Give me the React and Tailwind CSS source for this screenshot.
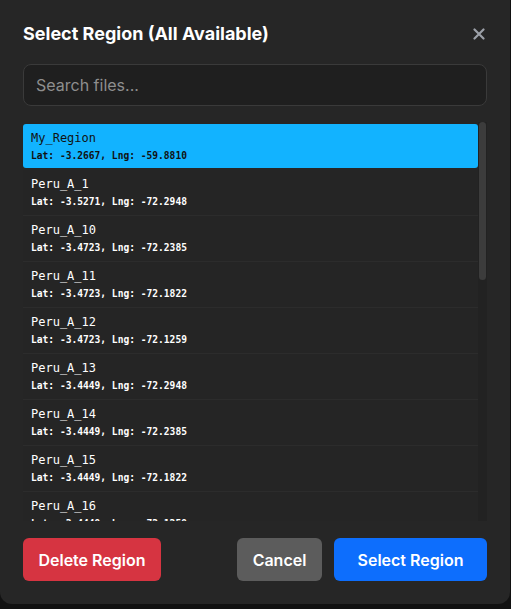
import React from "react";

const items = [
  ["My_Region", "Lat: -3.2667, Lng: -59.8810"],
  ["Peru_A_1", "Lat: -3.5271, Lng: -72.2948"],
  ["Peru_A_10", "Lat: -3.4723, Lng: -72.2385"],
  ["Peru_A_11", "Lat: -3.4723, Lng: -72.1822"],
  ["Peru_A_12", "Lat: -3.4723, Lng: -72.1259"],
  ["Peru_A_13", "Lat: -3.4449, Lng: -72.2948"],
  ["Peru_A_14", "Lat: -3.4449, Lng: -72.2385"],
  ["Peru_A_15", "Lat: -3.4449, Lng: -72.1822"],
  ["Peru_A_16", "Lat: -3.4449, Lng: -72.1259"],
];

export default function App() {
  return (
    <div className="h-[609px] w-[511px] bg-[#111111] overflow-hidden" style={{ fontFamily: "Inter, 'Liberation Sans', sans-serif" }}>
      <div className="h-[604px] w-[510px] bg-[#262626] rounded-b-[12px] px-[23px] pt-[20px] flex flex-col">
        <div className="flex items-center justify-between h-[28px]">
          <h2 className="text-[18px] font-bold text-white leading-[28px]">Select Region (All Available)</h2>
          <svg width="12" height="12" viewBox="0 0 12 12" className="mr-[2px]">
            <path d="M1.5 1.5 L10.5 10.5 M10.5 1.5 L1.5 10.5" stroke="#9ca0a8" strokeWidth="2.2" strokeLinecap="round" />
          </svg>
        </div>
        <div className="mt-[16px] h-[42px] rounded-[8px] border border-[#3a3a3a] bg-[#1f1f1f] flex items-center px-[12px]">
          <span className="text-[16px] text-[#8e8e8e]">Search files...</span>
        </div>
        <div className="mt-[16px] h-[399px] flex overflow-hidden">
          <div className="flex-1 pt-[2px] overflow-hidden" style={{ fontFamily: "'DejaVu Sans Mono', monospace" }}>
            {items.map(([name, pos], i) => (
              <div
                key={name}
                className={
                  i === 0
                    ? "h-[44px] mb-[2px] bg-[#12b3ff] rounded-[3px] px-[8px] pt-[6px] text-[#111]"
                    : "h-[46px] border-b border-[#2c2c2c] bg-[#252525] px-[8px] pt-[6px] text-white"
                }
              >
                <div className="text-[12px] leading-[16px]">{name}</div>
                <div className="text-[9.6px] font-bold leading-[12px] mt-[4px]">{pos}</div>
              </div>
            ))}
          </div>
          <div className="w-[9px] bg-[#222222] flex justify-center">
            <div className="w-[7px] h-[158px] rounded-full bg-[#3c3c3c]"></div>
          </div>
        </div>
        <div className="mt-[17px] flex items-center">
          <button className="h-[43px] w-[138px] rounded-[6px] bg-[#d63441] text-white text-[16px] font-semibold">Delete Region</button>
          <div className="flex-1"></div>
          <button className="h-[43px] w-[85px] rounded-[6px] bg-[#5c5c5c] text-white text-[16px] font-semibold">Cancel</button>
          <button className="ml-[12px] h-[43px] w-[153px] rounded-[6px] bg-[#0d6efd] text-white text-[16px] font-semibold">Select Region</button>
        </div>
      </div>
    </div>
  );
}
